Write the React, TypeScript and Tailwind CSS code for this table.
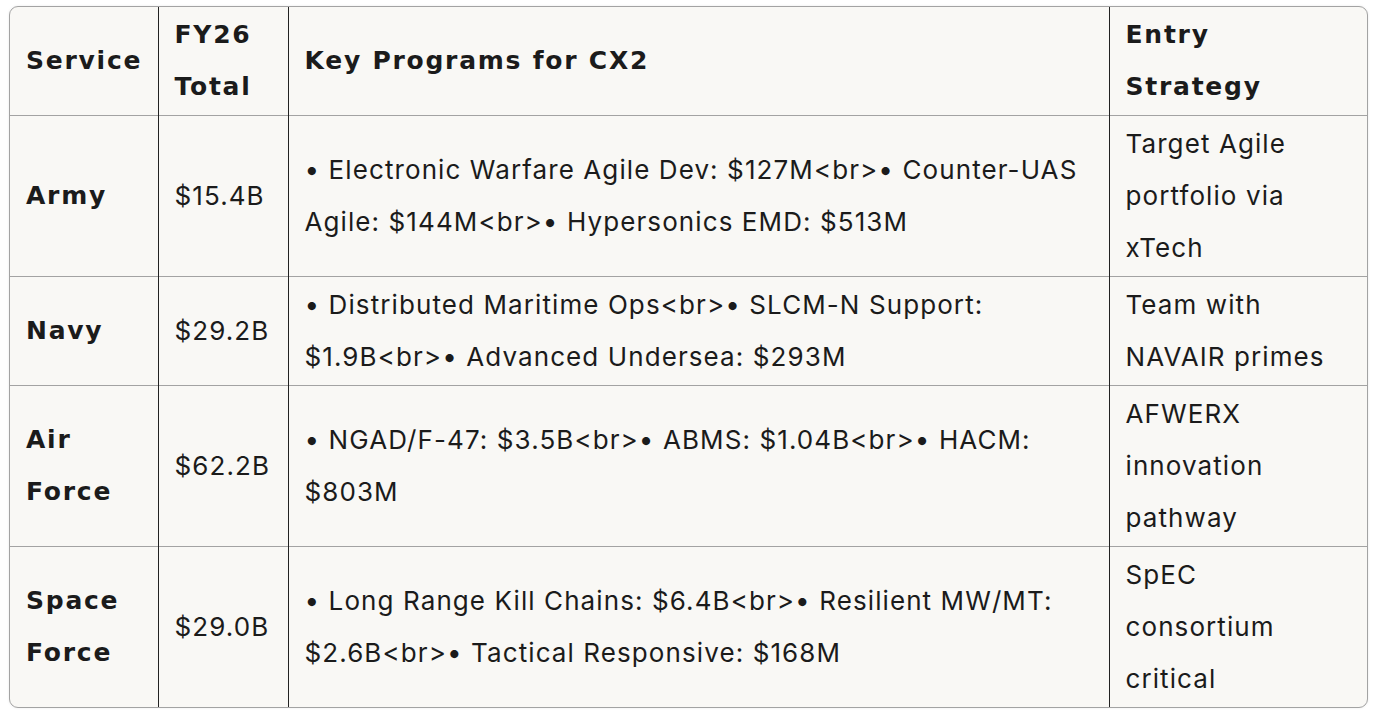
const rows = [
  {
    service: ["Army"],
    total: "$15.4B",
    programs: "• Electronic Warfare Agile Dev: $127M<br>• Counter-UAS Agile: $144M<br>• Hypersonics EMD: $513M",
    entry: "Target Agile portfolio via xTech",
  },
  {
    service: ["Navy"],
    total: "$29.2B",
    programs: "• Distributed Maritime Ops<br>• SLCM-N Support: $1.9B<br>• Advanced Undersea: $293M",
    entry: "Team with NAVAIR primes",
  },
  {
    service: ["Air", "Force"],
    total: "$62.2B",
    programs: "• NGAD/F-47: $3.5B<br>• ABMS: $1.04B<br>• HACM: $803M",
    entry: "AFWERX innovation pathway",
  },
  {
    service: ["Space", "Force"],
    total: "$29.0B",
    programs: "• Long Range Kill Chains: $6.4B<br>• Resilient MW/MT: $2.6B<br>• Tactical Responsive: $168M",
    entry: "SpEC consortium critical",
  },
];

const head = "font-['DejaVu_Sans',sans-serif] font-bold tracking-[0.07em] text-[25px]";

export default function App() {
  return (
    <div className="bg-white w-[1378px] h-[714px] pt-[6px] pl-[9px] font-['Inter',sans-serif] text-[#1b1b1b]">
      <div className="w-[1359px] rounded-[9px] border border-[#a3a3a3] overflow-hidden bg-[#f9f8f5] shadow-[0_0_3px_rgba(0,0,0,0.08)]">
        <table className="w-full table-fixed border-collapse text-[26px] tracking-[0.042em] leading-[52px]">
          <colgroup>
            <col className="w-[148px]" />
            <col className="w-[130px]" />
            <col className="w-[821px]" />
            <col />
          </colgroup>
          <thead>
            <tr className="h-[108px]">
              <th className={`text-left align-middle px-4 ${head} border-r border-[#222]`}>Service</th>
              <th className={`text-left align-middle px-4 ${head} border-r border-[#222]`}>
                <div className="w-min">FY26 Total</div>
              </th>
              <th className={`text-left align-middle px-4 ${head} border-r border-[#222]`}>Key Programs for CX2</th>
              <th className={`text-left align-middle px-4 ${head}`}>
                <div className="w-min">Entry Strategy</div>
              </th>
            </tr>
          </thead>
          <tbody>
            {rows.map((r, i) => (
              <tr key={i} className="border-t border-[#a3a3a3]">
                <td className={`align-middle px-4 py-[2px] ${head} border-r border-[#222]`}>
                  {r.service.map((s) => (
                    <div key={s}>{s}</div>
                  ))}
                </td>
                <td className="align-middle px-4 py-[2px] border-r border-[#222]">{r.total}</td>
                <td className="align-middle px-4 py-[2px] border-r border-[#222]">{r.programs}</td>
                <td className="align-middle px-4 py-[2px]">{r.entry}</td>
              </tr>
            ))}
          </tbody>
        </table>
      </div>
    </div>
  );
}
